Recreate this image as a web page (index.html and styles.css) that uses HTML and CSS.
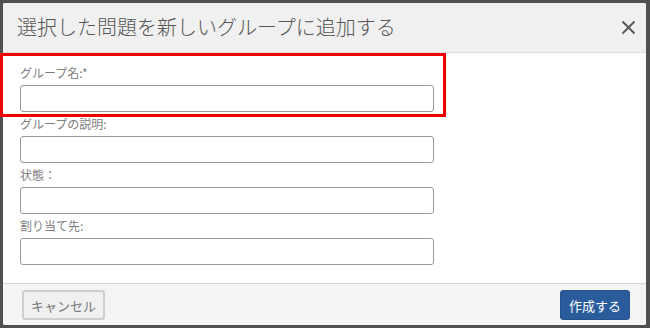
FILE: index.html
```html
<!DOCTYPE html>
<html lang="ja">
<head>
<meta charset="utf-8">
<link rel="stylesheet" href="styles.css">
</head>
<body>
<div class="dialog">
  <div class="header">
    <h1 class="title">選択した問題を新しいグループに追加する</h1>
    <button class="close" aria-label="閉じる">
      <svg width="15" height="15" viewBox="0 0 15 15"><path d="M1.5 1.5 L13.5 13.5 M13.5 1.5 L1.5 13.5" stroke="#555" stroke-width="1.8" fill="none"/></svg>
    </button>
  </div>
  <div class="body">
    <div class="field"><label>グループ名:*</label><input type="text"></div>
    <div class="field"><label>グループの説明:</label><input type="text"></div>
    <div class="field"><label>状態：</label><input type="text"></div>
    <div class="field"><label>割り当て先:</label><input type="text"></div>
  </div>
  <div class="footer">
    <button class="btn cancel">キャンセル</button>
    <button class="btn primary">作成する</button>
  </div>
</div>
<div class="highlight"></div>
</body>
</html>
```
FILE: styles.css
```css
html, body {
  margin: 0;
  height: 100%;
}
body {
  background: #505050;
  padding: 3px 4px 3px 3px;
  box-sizing: border-box;
  font-family: "Noto Sans CJK JP", "Noto Sans", sans-serif;
  position: relative;
}
.dialog {
  height: 322px;
  background: #fff;
  display: flex;
  flex-direction: column;
  border-radius: 2px;
  overflow: hidden;
}
.header {
  height: 49px;
  background: #f0f0f0;
  border-bottom: 1px dotted #c8c8c8;
  display: flex;
  align-items: center;
  justify-content: space-between;
  padding: 0 10px 0 14px;
}
.title {
  margin: 0;
  font-size: 20px;
  font-weight: 300;
  color: #555;
  line-height: 1;
  padding-bottom: 2px;
}
.close {
  background: none;
  border: 0;
  padding: 0;
  width: 15px;
  height: 15px;
  display: flex;
  margin-top: -1px;
}
.body {
  flex: 1;
  padding: 8px 0 0 17px;
}
.field {
  margin-top: 4px;
  display: flex;
  flex-direction: column;
  width: 414px;
}
.field label {
  font-size: 12px;
  line-height: 16px;
  color: #808080;
  height: 16px;
  margin-bottom: 4px;
}
.field input {
  box-sizing: border-box;
  height: 27px;
  width: 414px;
  border: 1px solid #999;
  border-radius: 3px;
  background: #fff;
  margin: 0;
}
.footer {
  border-top: 1px solid #d6d6d6;
  background: #f4f4f4;
  display: flex;
  justify-content: space-between;
  align-items: flex-start;
  padding: 6px 16px 0 19px;
  box-sizing: border-box;
  height: 42px;
}
.btn {
  height: 30px;
  font-family: "Noto Sans CJK JP", "Noto Sans", sans-serif;
  font-size: 13px;
  border-radius: 3px;
  padding: 0;
}
.cancel {
  width: 83px;
  background: #f0f0f0;
  border: 2px solid #cfcfcf;
  color: #777;
}
.primary {
  width: 70px;
  background: #2a5c9c;
  border: 1px solid #24528c;
  color: #fff;
}
.highlight {
  position: absolute;
  left: 0;
  top: 53px;
  width: 446px;
  height: 64px;
  box-sizing: border-box;
  border: 3px solid #f00000;
  pointer-events: none;
}
```
